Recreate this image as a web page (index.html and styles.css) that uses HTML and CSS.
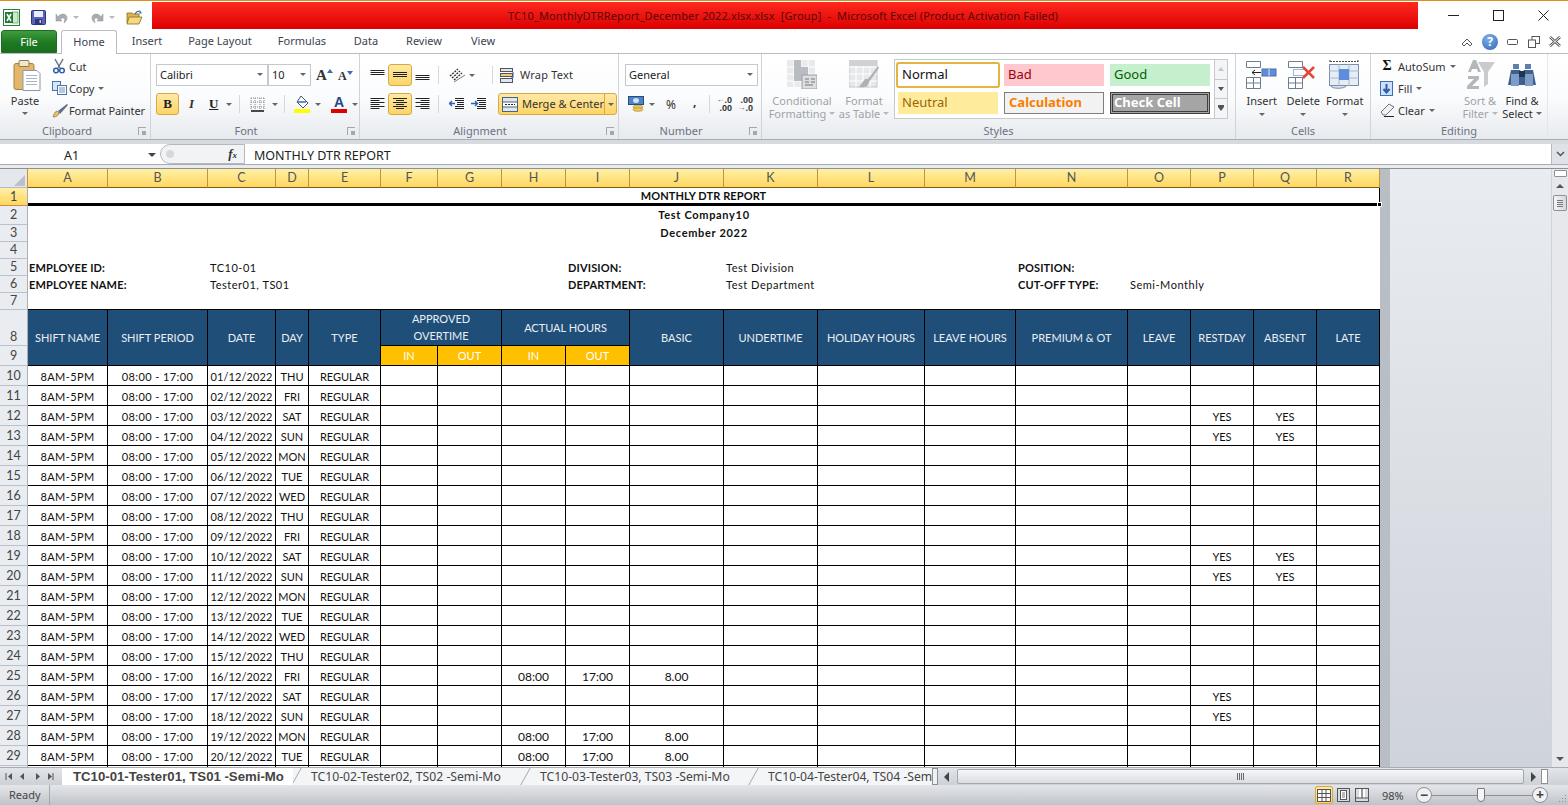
FILE: index.html
```html
<!DOCTYPE html>
<html lang="en">
<head>
<meta charset="utf-8">
<title>Excel</title>
<link rel="stylesheet" href="styles.css">
</head>
<body>
<div class="app">
<header class="titlebar">
  <div class="qat">
    <svg class="q-logo" width="17" height="17" viewBox="0 0 17 17"><rect x=".5" y=".5" width="16" height="16" fill="#fff" stroke="#2d7d3a"/><rect x="9" y="3" width="6" height="11" fill="#cfe8cf" stroke="#4a9a55" stroke-width=".7"/><path d="M2 3h8v11H2z" fill="#1f7a35"/><path d="M4 5l4 7M8 5l-4 7" stroke="#fff" stroke-width="1.6"/></svg>
    <i class="q-sep"></i>
    <svg class="q-save" width="15" height="15" viewBox="0 0 15 15"><rect x=".5" y=".5" width="14" height="14" rx="1" fill="#5a63b8" stroke="#2c3180"/><rect x="3" y="1" width="9" height="6" fill="#e8ecf5"/><rect x="4" y="9" width="7" height="5" fill="#30357f"/><rect x="8.5" y="10" width="1.5" height="3" fill="#ccd"/></svg>
    <svg class="q-undo" width="13" height="13" viewBox="0 0 13 13"><path d="M3 6c2-4 9-4 9 1 0 2-1 3-3 5 1-3 1-5-1-5-1 0-2 .5-2.500 1.500L7 10H1V3z" fill="#a9adb3" stroke="#8b8f95" stroke-width=".5"/></svg><span class="car q-car1"></span>
    <svg class="q-redo" width="13" height="13" viewBox="0 0 13 13"><path d="M10 6C8 2 1 2 1 7c0 2 1 3 3 5-1-3-1-5 1-5 1 0 2 .5 2.500 1.500L6 10h6V3z" fill="#a9adb3" stroke="#8b8f95" stroke-width=".5"/></svg><span class="car q-car2"></span>
    <svg class="q-open" width="17" height="15" viewBox="0 0 17 15"><path d="M1 3h5l1 1h6v9H1z" fill="#e0b653" stroke="#8c6a22" stroke-width=".8"/><path d="M1 14l2-7h13l-3 7z" fill="#f6d880" stroke="#8c6a22" stroke-width=".8"/><path d="M9 4c1-2 3-3 5-3M14 1l1 2-2 0" fill="none" stroke="#3a6fb0" stroke-width="1.100"/></svg>
    <i class="q-sep q-sep2"></i>
    <span class="q-more"><i></i><b class="car"></b></span>
  </div>
  <div class="redbar">TC10_MonthlyDTRReport_December 2022.xlsx.xlsx&nbsp; [Group]&nbsp; -&nbsp; Microsoft Excel (Product Activation Failed)</div>
  <div class="winctl">
    <svg width="11" height="11" viewBox="0 0 11 11"><path d="M0 5.500h11" stroke="#222"/></svg>
    <svg width="11" height="11" viewBox="0 0 11 11"><rect x=".5" y=".5" width="10" height="10" fill="none" stroke="#222"/></svg>
    <svg width="11" height="11" viewBox="0 0 11 11"><path d="M.5.500l10 10M10.500.500l-10 10" stroke="#222"/></svg>
  </div>
</header>

<nav class="tabsrow">
  <span class="file">File</span>
  <span class="tab on">Home</span>
  <span class="tab t-insert">Insert</span>
  <span class="tab t-page">Page Layout</span>
  <span class="tab t-form">Formulas</span>
  <span class="tab t-data">Data</span>
  <span class="tab t-rev">Review</span>
  <span class="tab t-view">View</span>
  <div class="helpicons">
    <svg width="12" height="10" viewBox="0 0 12 10"><path d="M1 7l5-5 5 5-2 2-3-3-3 3z" fill="#fff" stroke="#555"/></svg>
    <span class="help">?</span>
    <svg width="12" height="8" viewBox="0 0 12 8"><rect x=".5" y="1.500" width="10" height="5" rx="1" fill="#fff" stroke="#555"/></svg>
    <svg width="12" height="12" viewBox="0 0 12 12"><rect x="4" y=".5" width="7.500" height="7" fill="#fff" stroke="#555"/><rect x=".5" y="4" width="7" height="7.500" fill="#fff" stroke="#555"/></svg>
    <svg width="12" height="11" viewBox="0 0 12 11"><path d="M1 1l10 9M11 1L1 10" stroke="#555" stroke-width="2.600"/><path d="M1 1l10 9M11 1L1 10" stroke="#fff" stroke-width="1"/></svg>
  </div>
</nav>

<section class="ribbon">
  <div class="grp g-clip">
    <div class="gbody">
      <div class="big b-paste">
        <svg width="28" height="32" viewBox="0 0 28 32"><rect x="1" y="4" width="20" height="26" rx="2" fill="#e3b76a" stroke="#a88240"/><rect x="6" y="1" width="10" height="6" rx="1" fill="#efe6cf" stroke="#8c7a55"/><path d="M10 11h14l3 3v17H10z" fill="#fff" stroke="#8b97ab"/><path d="M13 16h11M13 19h11M13 22h11M13 25h11" stroke="#a9b3c4"/></svg>
        <span class="bl">Paste</span><span class="car"></span>
      </div>
      <div class="stack">
        <div class="sm"><svg width="14" height="16" viewBox="0 0 14 16"><path d="M3 1l5 9M11 1L6 10" stroke="#6b7480" stroke-width="1.500"/><circle cx="4" cy="12.500" r="2.300" fill="none" stroke="#2f5fa8" stroke-width="1.500"/><circle cx="10" cy="12.500" r="2.300" fill="none" stroke="#2f5fa8" stroke-width="1.500"/></svg><span>Cut</span></div>
        <div class="sm"><svg width="15" height="14" viewBox="0 0 15 14"><rect x=".5" y=".5" width="8" height="9" fill="#d9e6f7" stroke="#4a74ad"/><rect x="5.500" y="4.500" width="9" height="9" fill="#fff" stroke="#4a74ad"/><path d="M7 7h6M7 9h6M7 11h6" stroke="#4a74ad" stroke-width=".8"/></svg><span>Copy</span><i class="car"></i></div>
        <div class="sm"><svg width="17" height="15" viewBox="0 0 17 15"><path d="M1 14c3 0 5-1 6-4l-2-2c-3 1-3 4-4 6z" fill="#e5c36e" stroke="#8c7030" stroke-width=".7"/><path d="M6 8l9-7 1 1-8 9z" fill="#5d6f8a"/></svg><span>Format Painter</span></div>
      </div>
    </div>
    <div class="glab pad">Clipboard<i class="launch"></i></div>
  </div>

  <div class="grp g-font">
    <div class="gbody col">
      <div class="r">
        <span class="combo c-font">Calibri<i class="car"></i></span>
        <span class="combo c-size">10<i class="car"></i></span>
        <span class="fa fa1">A<sup class="tri up"></sup></span>
        <span class="fa fa2">A<sup class="tri dn"></sup></span>
      </div>
      <div class="r r2">
        <span class="hl ic-b">B</span>
        <span class="ic-i">I</span>
        <span class="ic-u">U</span><i class="car c-u"></i>
        <i class="vs v1"></i>
        <svg class="ic-bd" width="15" height="15" viewBox="0 0 15 15"><path d="M1 1h13M1 5h13M1 10h13M1 1v12M5 1v12M10 1v12M14 1v12" stroke="#888" stroke-dasharray="1 1" fill="none"/><path d="M1 14h13" stroke="#111" stroke-width="1.500"/></svg><i class="car c-bd"></i>
        <i class="vs v2"></i>
        <svg class="ic-fill" width="17" height="18" viewBox="0 0 17 18"><path d="M7 1l7 7-5 5-6-6z" fill="#fff" stroke="#44506a"/><path d="M4 7h8" stroke="#6a8fc0" stroke-width="2"/><rect y="14" width="16" height="4" fill="#ff0"/></svg><i class="car c-fill"></i>
        <span class="ic-fc">A<i></i></span><i class="car c-fc"></i>
      </div>
    </div>
    <div class="glab pad">Font<i class="launch"></i></div>
  </div>

  <div class="grp g-align">
    <div class="gbody col">
      <div class="r">
        <svg class="al a1" width="14" height="14" viewBox="0 0 14 14"><path d="M0 2.500h14M0 4.500h14M0 6.500h14" stroke="#222"/></svg>
        <span class="hl al-hl"><svg width="14" height="14" viewBox="0 0 14 14"><path d="M0 4.500h14M0 6.500h14M0 8.500h14" stroke="#222"/></svg></span>
        <svg class="al a3" width="14" height="14" viewBox="0 0 14 14"><path d="M0 7.500h14M0 9.500h14M0 11.500h14" stroke="#222"/></svg>
        <i class="vs v3"></i>
        <svg class="a-or" width="18" height="16" viewBox="0 0 18 16"><path d="M2 9l8-7M4 11l8-7M6 13l8-7" stroke="#333" stroke-width="1.400" stroke-dasharray="2 1"/><path d="M6 15l11-7" stroke="#6a7c96"/></svg><i class="car c-or"></i>
        <i class="vs v4"></i>
        <svg class="a-wr" width="16" height="15" viewBox="0 0 16 15"><rect x=".5" y=".5" width="12" height="3" fill="#dfe6f2" stroke="#555"/><rect x=".5" y="5.500" width="12" height="3" fill="#f4c97e" stroke="#555"/><rect x=".5" y="10.500" width="12" height="4" fill="#dfe6f2" stroke="#555"/><path d="M13 4v6h-2" fill="none" stroke="#2f5fa8"/></svg><span class="lbl">Wrap Text</span>
      </div>
      <div class="r r2">
        <svg class="al a1" width="14" height="14" viewBox="0 0 14 14"><path d="M0 1.500h14M0 3.500h9M0 5.500h14M0 7.500h9M0 9.500h14M0 11.500h9" stroke="#222"/></svg>
        <span class="hl al-hl"><svg width="14" height="14" viewBox="0 0 14 14"><path d="M0 1.500h14M3 3.500h8M0 5.500h14M3 7.500h8M0 9.500h14M3 11.500h8" stroke="#222"/></svg></span>
        <svg class="al a3" width="14" height="14" viewBox="0 0 14 14"><path d="M0 1.500h14M5 3.500h9M0 5.500h14M5 7.500h9M0 9.500h14M5 11.500h9" stroke="#222"/></svg>
        <i class="vs v3"></i>
        <svg class="a-in1" width="15" height="14" viewBox="0 0 15 14"><path d="M6 1.500h9M6 3.500h9M8 5.500h7M8 7.500h7M6 9.500h9M6 11.500h9" stroke="#222"/><path d="M0 6.500h6M3 4L.5 6.500 3 9" fill="none" stroke="#2f5fb8" stroke-width="1.400"/></svg>
        <svg class="a-in2" width="15" height="14" viewBox="0 0 15 14"><path d="M6 1.500h9M6 3.500h9M8 5.500h7M8 7.500h7M6 9.500h9M6 11.500h9" stroke="#222"/><path d="M0 6.500h6M4 4l2.500 2.500L4 9" fill="none" stroke="#2f5fb8" stroke-width="1.400"/></svg>
        <span class="merge"><span class="m-main"><svg width="16" height="15" viewBox="0 0 16 15"><rect x=".5" y=".5" width="15" height="14" fill="#dfe6f2" stroke="#4f6278"/><rect x="1" y="5" width="14" height="5" fill="#fff"/><path d="M.5 5h15M.5 10h15" stroke="#4f6278"/><path d="M3 7.500h10" stroke="#222" stroke-dasharray="2 1"/></svg>Merge &amp; Center</span><span class="m-drop"><i class="car"></i></span></span>
      </div>
    </div>
    <div class="glab pad">Alignment<i class="launch"></i></div>
  </div>

  <div class="grp g-num">
    <div class="gbody col">
      <div class="r"><span class="combo c-gen">General<i class="car"></i></span></div>
      <div class="r r2">
        <svg class="n-cur" width="17" height="16" viewBox="0 0 17 16"><rect x=".5" y=".5" width="15" height="8" fill="#4f83c4" stroke="#244a82"/><ellipse cx="8" cy="4.500" rx="3" ry="2.500" fill="#cfe0f5"/><ellipse cx="10" cy="11" rx="5" ry="1.800" fill="#efc75e" stroke="#a27f24" stroke-width=".6"/><ellipse cx="10" cy="13.500" rx="5" ry="1.800" fill="#efc75e" stroke="#a27f24" stroke-width=".6"/></svg><i class="car c-cur"></i>
        <span class="n-pct">%</span>
        <span class="n-com">,</span>
        <i class="vs v5"></i>
        <span class="n-dec"><b class="dm"><em class="ar">←</em>.0</b><b>.00</b></span>
        <span class="n-dec n-dec2"><b>.00</b><b class="dm"><em class="ar">→</em>.0</b></span>
      </div>
    </div>
    <div class="glab pad">Number<i class="launch"></i></div>
  </div>

  <div class="grp g-styles">
    <div class="gbody">
      <div class="big dim b-cf">
        <svg width="30" height="29" viewBox="0 0 30 29"><rect width="28" height="27" fill="#e9eaec"/><path d="M7 0v27M14 0v27M21 0v27M0 7h28M0 14h28M0 21h28" stroke="#fff"/><path d="M7 0h7v7h7v14H7z" fill="#b9bcc0"/><rect x="15" y="15" width="15" height="14" fill="#dcdee1" stroke="#9b9ea3"/><path d="M18 19h4M18 22h4M18 25h8M24 19h4M24 22h4" stroke="#777"/></svg>
        <span class="bl">Conditional</span><span class="bl">Formatting<i class="car"></i></span>
      </div>
      <div class="big dim b-ft">
        <svg width="30" height="29" viewBox="0 0 30 29"><rect width="28" height="27" fill="#e7e8ea" stroke="#c3c5c8"/><path d="M7 0v27M14 0v27M21 0v27M0 7h28M0 14h28M0 21h28" stroke="#fff"/><rect y="0" width="28" height="6" fill="#cfd1d4"/><path d="M29 6L19 19l-3 0-6 8c5 1 9 0 10-5l10-14z" fill="#aeb1b5"/></svg>
        <span class="bl">Format</span><span class="bl">as Table<i class="car"></i></span>
      </div>
      <div class="gallery">
        <div class="cells">
          <span class="st st-normal">Normal</span><span class="st st-bad">Bad</span><span class="st st-good">Good</span>
          <span class="st st-neutral">Neutral</span><span class="st st-calc">Calculation</span><span class="st st-check">Check Cell</span>
        </div>
        <div class="gscroll">
          <span><i class="tri up gray"></i></span><span><i class="tri dn dark"></i></span><span class="more"><i class="tri dn dark"></i></span>
        </div>
      </div>
    </div>
    <div class="glab">Styles</div>
  </div>

  <div class="grp g-cells">
    <div class="gbody">
      <div class="big b-cell">
        <svg width="31" height="28" viewBox="0 0 31 28"><path d="M.5.500h14v6H.5zM.5 16.500h14v11H.5zM7.500 16.500v11M.5 22h14" fill="#fff" stroke="#6d7d90"/><rect x="16" y="8" width="14" height="7" fill="#5d8ddc" stroke="#4a6fa8"/><path d="M23 8v7" stroke="#dce8f8"/><path d="M6 11.500h9M9 9l-3 2.500L9 14" fill="none" stroke="#222"/></svg>
        <span class="bl">Insert</span><span class="car"></span>
      </div>
      <div class="big b-cell">
        <svg width="31" height="28" viewBox="0 0 31 28"><path d="M.5.500h14v6H.5zM.5 16.500h14v11H.5zM7.500 16.500v11M.5 22h14" fill="#fff" stroke="#6d7d90"/><rect x="5.500" y="8.500" width="13" height="6" fill="#fff" stroke="#3d6cc0" stroke-dasharray="1 1"/><path d="M15 6l11 11M26 6L15 17" stroke="#e0483a" stroke-width="2.500"/></svg>
        <span class="bl">Delete</span><span class="car"></span>
      </div>
      <div class="big b-cell">
        <svg width="31" height="30" viewBox="0 0 31 30"><path d="M1 1.500h28M1 0v3M29 0v3" stroke="#444" stroke-dasharray="2 1"/><rect x=".5" y="4.500" width="29" height="21" fill="#e6edf7" stroke="#7b8ea6"/><path d="M10 4v22M20 4v22M0 11h30M0 18h30" stroke="#a9b8cc"/><rect x="10" y="9" width="10" height="11" fill="#5d8ddc"/><path d="M2 26c0 3 14 3 15 0" fill="#dde" stroke="#7b8ea6"/></svg>
        <span class="bl">Format</span><span class="car"></span>
      </div>
    </div>
    <div class="glab">Cells</div>
  </div>

  <div class="grp g-edit">
    <div class="gbody">
      <div class="stack">
        <div class="sm"><b class="sigma">Σ</b><span>AutoSum</span><i class="car"></i></div>
        <div class="sm"><svg width="13" height="15" viewBox="0 0 13 15"><rect x=".5" y=".5" width="12" height="14" fill="#cfe0f7" stroke="#3b6fb5"/><path d="M6.500 3v7M3.500 8l3 3.500 3-3.500" fill="none" stroke="#2a5dac" stroke-width="2"/></svg><span>Fill</span><i class="car"></i></div>
        <div class="sm"><svg width="15" height="14" viewBox="0 0 15 14"><path d="M1 9l8-8 5 3-8 8H3z" fill="#eef0f3" stroke="#6c7480"/><path d="M4 13.500h10" stroke="#222"/></svg><span>Clear</span><i class="car"></i></div>
      </div>
      <div class="big dim b-ed">
        <svg width="30" height="30" viewBox="0 0 30 30"><path d="M3 12L8 0h3l5 12h-3l-1-3H7l-1 3zM3 16h11v3l-7 7h7v3H2v-3l7-7H3z" fill="#b5b7ba"/><path d="M13 2h17l-7 10v12l-4 3V12z" fill="#c9cbce"/></svg>
        <span class="bl">Sort &amp;</span><span class="bl">Filter<i class="car"></i></span>
      </div>
      <div class="big b-ed">
        <svg width="28" height="26" viewBox="0 0 28 26"><path d="M5 2h6v5H5zM17 2h6v5h-6z" fill="#5f7faa"/><path d="M3 8h9l2 3 2-3h9l3 15H0z" fill="#3f5f8e"/><path d="M3 12h8v12H3zM17 12h8v12h-8z" fill="#7d9cc6"/><rect x="11" y="9" width="6" height="6" fill="#1f3555"/></svg>
        <span class="bl">Find &amp;</span><span class="bl">Select<i class="car"></i></span>
      </div>
    </div>
    <div class="glab">Editing</div>
  </div>
</section>

<div class="band"></div>
<div class="fbar">
  <div class="namebox">A1<i class="car"></i></div>
  <div class="fxwrap"><span class="pill"><i></i></span><em>f<small>x</small></em></div>
  <div class="finput">MONTHLY DTR REPORT</div>
  <div class="fexp"><svg width="9" height="6" viewBox="0 0 9 6"><path d="M1 1l3.500 3.500L8 1" fill="none" stroke="#555" stroke-width="1.500"/></svg></div>
</div>
<div class="band band2"></div>

<main class="sheetarea">
  <table class="sheet">
    <colgroup>
      <col class="w28"><col class="w80"><col class="w100"><col class="w68"><col class="w33"><col class="w72"><col class="w57"><col class="w64"><col class="w64"><col class="w64"><col class="w94"><col class="w94"><col class="w107"><col class="w91"><col class="w112"><col class="w63"><col class="w63"><col class="w63"><col class="w63">
    </colgroup>
    <tr class="h19 colhead"><th class="corner"><i></i></th><th>A</th><th>B</th><th>C</th><th>D</th><th>E</th><th>F</th><th>G</th><th>H</th><th>I</th><th>J</th><th>K</th><th>L</th><th>M</th><th>N</th><th>O</th><th>P</th><th>Q</th><th>R</th></tr>
    <tr class="h18"><th class="sel">1</th><td colspan="18" class="title1">MONTHLY DTR REPORT<i class="handle"></i></td></tr>
    <tr class="h19"><th>2</th><td colspan="18" class="plain center bold wide up1">Test Company10</td></tr>
    <tr class="h17"><th>3</th><td colspan="18" class="plain center bold wide up1">December 2022</td></tr>
    <tr class="h17"><th>4</th><td colspan="18" class="plain"></td></tr>
    <tr class="h17"><th>5</th><td colspan="2" class="plain bold lead">EMPLOYEE ID:</td><td colspan="6" class="plain reg">TC10-01</td><td colspan="2" class="plain bold">DIVISION:</td><td colspan="3" class="plain reg">Test Division</td><td class="plain bold">POSITION:</td><td colspan="4" class="plain"></td></tr>
    <tr class="h17"><th>6</th><td colspan="2" class="plain bold lead">EMPLOYEE NAME:</td><td colspan="6" class="plain reg">Tester01, TS01</td><td colspan="2" class="plain bold">DEPARTMENT:</td><td colspan="3" class="plain reg">Test Department</td><td class="plain bold">CUT-OFF TYPE:</td><td colspan="4" class="plain reg">Semi-Monthly</td></tr>
    <tr class="h17"><th>7</th><td colspan="18" class="plain lined"></td></tr>
    <tr class="h36 hdr"><th class="rh rb">8</th><td rowspan="2">SHIFT NAME</td><td rowspan="2">SHIFT PERIOD</td><td rowspan="2">DATE</td><td rowspan="2">DAY</td><td rowspan="2">TYPE</td><td colspan="2" class="lift">APPROVED<br>OVERTIME</td><td colspan="2">ACTUAL HOURS</td><td rowspan="2">BASIC</td><td rowspan="2">UNDERTIME</td><td rowspan="2">HOLIDAY HOURS</td><td rowspan="2">LEAVE HOURS</td><td rowspan="2">PREMIUM &amp; OT</td><td rowspan="2">LEAVE</td><td rowspan="2">RESTDAY</td><td rowspan="2">ABSENT</td><td rowspan="2">LATE</td></tr>
    <tr class="h20 hdr"><th class="rh">9</th><td class="gold">IN</td><td class="gold">OUT</td><td class="gold">IN</td><td class="gold">OUT</td></tr>
    <tr><th>10</th><td class="sft">8AM-5PM</td><td class="sft">08:00 - 17:00</td><td class="dt">01/12/2022</td><td>THU</td><td>REGULAR</td><td></td><td></td><td></td><td></td><td></td><td></td><td></td><td></td><td></td><td></td><td></td><td></td><td></td></tr>
    <tr><th>11</th><td class="sft">8AM-5PM</td><td class="sft">08:00 - 17:00</td><td class="dt">02/12/2022</td><td>FRI</td><td>REGULAR</td><td></td><td></td><td></td><td></td><td></td><td></td><td></td><td></td><td></td><td></td><td></td><td></td><td></td></tr>
    <tr><th>12</th><td class="sft">8AM-5PM</td><td class="sft">08:00 - 17:00</td><td class="dt">03/12/2022</td><td>SAT</td><td>REGULAR</td><td></td><td></td><td></td><td></td><td></td><td></td><td></td><td></td><td></td><td></td><td>YES</td><td>YES</td><td></td></tr>
    <tr><th>13</th><td class="sft">8AM-5PM</td><td class="sft">08:00 - 17:00</td><td class="dt">04/12/2022</td><td>SUN</td><td>REGULAR</td><td></td><td></td><td></td><td></td><td></td><td></td><td></td><td></td><td></td><td></td><td>YES</td><td>YES</td><td></td></tr>
    <tr><th>14</th><td class="sft">8AM-5PM</td><td class="sft">08:00 - 17:00</td><td class="dt">05/12/2022</td><td>MON</td><td>REGULAR</td><td></td><td></td><td></td><td></td><td></td><td></td><td></td><td></td><td></td><td></td><td></td><td></td><td></td></tr>
    <tr><th>15</th><td class="sft">8AM-5PM</td><td class="sft">08:00 - 17:00</td><td class="dt">06/12/2022</td><td>TUE</td><td>REGULAR</td><td></td><td></td><td></td><td></td><td></td><td></td><td></td><td></td><td></td><td></td><td></td><td></td><td></td></tr>
    <tr><th>16</th><td class="sft">8AM-5PM</td><td class="sft">08:00 - 17:00</td><td class="dt">07/12/2022</td><td>WED</td><td>REGULAR</td><td></td><td></td><td></td><td></td><td></td><td></td><td></td><td></td><td></td><td></td><td></td><td></td><td></td></tr>
    <tr><th>17</th><td class="sft">8AM-5PM</td><td class="sft">08:00 - 17:00</td><td class="dt">08/12/2022</td><td>THU</td><td>REGULAR</td><td></td><td></td><td></td><td></td><td></td><td></td><td></td><td></td><td></td><td></td><td></td><td></td><td></td></tr>
    <tr><th>18</th><td class="sft">8AM-5PM</td><td class="sft">08:00 - 17:00</td><td class="dt">09/12/2022</td><td>FRI</td><td>REGULAR</td><td></td><td></td><td></td><td></td><td></td><td></td><td></td><td></td><td></td><td></td><td></td><td></td><td></td></tr>
    <tr><th>19</th><td class="sft">8AM-5PM</td><td class="sft">08:00 - 17:00</td><td class="dt">10/12/2022</td><td>SAT</td><td>REGULAR</td><td></td><td></td><td></td><td></td><td></td><td></td><td></td><td></td><td></td><td></td><td>YES</td><td>YES</td><td></td></tr>
    <tr><th>20</th><td class="sft">8AM-5PM</td><td class="sft">08:00 - 17:00</td><td class="dt">11/12/2022</td><td>SUN</td><td>REGULAR</td><td></td><td></td><td></td><td></td><td></td><td></td><td></td><td></td><td></td><td></td><td>YES</td><td>YES</td><td></td></tr>
    <tr><th>21</th><td class="sft">8AM-5PM</td><td class="sft">08:00 - 17:00</td><td class="dt">12/12/2022</td><td>MON</td><td>REGULAR</td><td></td><td></td><td></td><td></td><td></td><td></td><td></td><td></td><td></td><td></td><td></td><td></td><td></td></tr>
    <tr><th>22</th><td class="sft">8AM-5PM</td><td class="sft">08:00 - 17:00</td><td class="dt">13/12/2022</td><td>TUE</td><td>REGULAR</td><td></td><td></td><td></td><td></td><td></td><td></td><td></td><td></td><td></td><td></td><td></td><td></td><td></td></tr>
    <tr><th>23</th><td class="sft">8AM-5PM</td><td class="sft">08:00 - 17:00</td><td class="dt">14/12/2022</td><td>WED</td><td>REGULAR</td><td></td><td></td><td></td><td></td><td></td><td></td><td></td><td></td><td></td><td></td><td></td><td></td><td></td></tr>
    <tr><th>24</th><td class="sft">8AM-5PM</td><td class="sft">08:00 - 17:00</td><td class="dt">15/12/2022</td><td>THU</td><td>REGULAR</td><td></td><td></td><td></td><td></td><td></td><td></td><td></td><td></td><td></td><td></td><td></td><td></td><td></td></tr>
    <tr><th>25</th><td class="sft">8AM-5PM</td><td class="sft">08:00 - 17:00</td><td class="dt">16/12/2022</td><td>FRI</td><td>REGULAR</td><td></td><td></td><td class="num">08:00</td><td class="num">17:00</td><td class="num">8.00</td><td></td><td></td><td></td><td></td><td></td><td></td><td></td><td></td></tr>
    <tr><th>26</th><td class="sft">8AM-5PM</td><td class="sft">08:00 - 17:00</td><td class="dt">17/12/2022</td><td>SAT</td><td>REGULAR</td><td></td><td></td><td></td><td></td><td></td><td></td><td></td><td></td><td></td><td></td><td>YES</td><td></td><td></td></tr>
    <tr><th>27</th><td class="sft">8AM-5PM</td><td class="sft">08:00 - 17:00</td><td class="dt">18/12/2022</td><td>SUN</td><td>REGULAR</td><td></td><td></td><td></td><td></td><td></td><td></td><td></td><td></td><td></td><td></td><td>YES</td><td></td><td></td></tr>
    <tr><th>28</th><td class="sft">8AM-5PM</td><td class="sft">08:00 - 17:00</td><td class="dt">19/12/2022</td><td>MON</td><td>REGULAR</td><td></td><td></td><td class="num">08:00</td><td class="num">17:00</td><td class="num">8.00</td><td></td><td></td><td></td><td></td><td></td><td></td><td></td><td></td></tr>
    <tr><th>29</th><td class="sft">8AM-5PM</td><td class="sft">08:00 - 17:00</td><td class="dt">20/12/2022</td><td>TUE</td><td>REGULAR</td><td></td><td></td><td class="num">08:00</td><td class="num">17:00</td><td class="num">8.00</td><td></td><td></td><td></td><td></td><td></td><td></td><td></td><td></td></tr>
    <tr><th></th><td></td><td></td><td></td><td></td><td></td><td></td><td></td><td></td><td></td><td></td><td></td><td></td><td></td><td></td><td></td><td></td><td></td><td></td></tr>
  </table>
  <div class="shade"></div>
  <div class="empty"></div>
  <aside class="vscroll">
    <span class="vsplit"></span>
    <span class="varrow"><i class="tri up dark"></i></span>
    <span class="vthumb"></span>
    <span class="vtrack"></span>
    <span class="varrow"><i class="tri dn dark"></i></span>
  </aside>
</main>

<div class="sheettabs">
  <div class="tabnav">
    <svg width="52" height="9" viewBox="0 0 52 9"><path d="M1 1v7" stroke="#555"/><path d="M7 1L3 4.500 7 8zM19 1l-4 3.500L19 8zM31 1l4 3.500L31 8zM43 1l4 3.500L43 8z" fill="#555"/><path d="M48 1v7" stroke="#555"/></svg>
  </div>
  <div class="stabs">
    <span class="stab act">TC10-01-Tester01, TS01 -Semi-Mo</span>
    <span class="stab s2">TC10-02-Tester02, TS02 -Semi-Mo</span>
    <span class="stab s3">TC10-03-Tester03, TS03 -Semi-Mo</span>
    <span class="stab s4">TC10-04-Tester04, TS04 -Semi-Mo</span>
  </div>
  <span class="split"></span>
  <div class="hscroll">
    <i class="tri lf"></i>
    <span class="hthumb"><i></i></span>
    <i class="tri rt"></i>
    <span class="hend"></span>
  </div>
</div>

<footer class="status">
  <span class="ready">Ready</span>
  <div class="st-right">
    <span class="vw vw-on"><svg width="14" height="13" viewBox="0 0 14 13"><rect x=".5" y=".5" width="13" height="12" fill="#fff" stroke="#555"/><path d="M5 0v13M9 0v13M0 4.500h14M0 8.500h14" stroke="#555"/></svg></span>
    <span class="vw"><svg width="13" height="14" viewBox="0 0 13 14"><rect x=".5" y=".5" width="12" height="13" fill="#d8dbe0" stroke="#555"/><rect x="3.500" y="2.500" width="6" height="9" fill="#fff" stroke="#555"/><path d="M5 5h3M5 7h3M5 9h3" stroke="#777"/></svg></span>
    <span class="vw"><svg width="14" height="14" viewBox="0 0 14 14"><rect x=".5" y=".5" width="13" height="13" fill="#d8dbe0" stroke="#555"/><rect x="4" y="1" width="2" height="9" fill="#fff"/><rect x="8" y="1" width="2" height="9" fill="#fff"/><path d="M7 0v10M1 10h12" stroke="#555"/></svg></span>
    <span class="pct">98%</span>
    <span class="zbtn">−</span>
    <span class="zslide"><i></i></span>
    <span class="zbtn">+</span>
    <svg class="grip" width="10" height="10" viewBox="0 0 10 10"><path d="M8 1h1v1H8zM5 4h1v1H5zM8 4h1v1H8zM2 7h1v1H2zM5 7h1v1H5zM8 7h1v1H8z" fill="#8b9098"/></svg>
  </div>
</footer>
</div>
</body>
</html>
```
FILE: styles.css
```css
* { box-sizing: border-box; }
html, body { margin: 0; padding: 0; height: 100%; overflow: hidden; background: #fff; }
body { font-family: "Noto Sans", "Open Sans", sans-serif; font-size: 11px; color: #333; }
svg { display: block; flex: none; }
i { font-style: normal; }
.app { width: 1568px; height: 805px; display: flex; flex-direction: column; overflow: hidden; }

/* carets and triangles */
.car { display: inline-block; width: 0; height: 0; border-left: 3px solid transparent; border-right: 3px solid transparent; border-top: 3px solid #666; flex: none; }
.tri { display: inline-block; width: 0; height: 0; border-left: 4px solid transparent; border-right: 4px solid transparent; }
.tri.up { border-bottom: 4px solid #555; }
.tri.dn { border-top: 4px solid #555; }
.tri.gray.up { border-bottom-color: #c4c8ce; }
.tri.lf { border: 0; border-top: 5px solid transparent; border-bottom: 5px solid transparent; border-right: 5px solid #444; flex: none; }
.tri.rt { border: 0; border-top: 5px solid transparent; border-bottom: 5px solid transparent; border-left: 5px solid #444; flex: none; }

/* title bar */
.titlebar { height: 30px; flex: none; display: flex; border-top: 1px solid #d98f1e; padding-top: 1px; background: #fff; }
.qat { width: 152px; display: flex; align-items: center; padding: 3px 0 0 3px; flex: none; }
.q-sep { width: 1px; height: 14px; background: #8a8f96; margin: 0 7px 0 4px; }
.q-sep2 { margin: 0 4px 0 5px; }
.q-undo { margin-left: 9px; }
.q-car1 { margin: 0 0 0 5px; border-top-color: #b5b8bc; }
.q-redo { margin-left: 12px; }
.q-car2 { margin: 0 0 0 5px; border-top-color: #b5b8bc; }
.q-open { margin-left: 11px; }
.q-more { display: flex; flex-direction: column; align-items: center; gap: 1px; width: 8px; }
.q-more i { width: 7px; height: 1px; background: #222; }
.q-more .car { border-top-color: #222; border-left-width: 3.500px; border-right-width: 3.500px; border-top-width: 4px; }
.redbar { width: 1266px; height: 27px; flex: none; background: linear-gradient(#ff2a20, #dc0000); color: #5a0505; font-size: 11px; letter-spacing: .14px; text-align: center; line-height: 27px; padding-right: 4px; white-space: nowrap; }
.winctl { flex: 1; display: flex; align-items: center; padding: 0 19px 0 30px; justify-content: space-between; padding-bottom: 1px; }

/* tabs */
.tabsrow { height: 24px; flex: none; display: flex; align-items: stretch; border-bottom: 1px solid #b9bdc3; background: #fff; font-size: 11px; padding-left: 1px; color: #3c4450; }
.file { width: 56px; height: 23px; background: linear-gradient(#3f9c3f, #1d7a21 55%, #1a6e1e); border: 1px solid #1f6d22; border-radius: 3px 3px 0 0; color: #fff; display: flex; align-items: center; justify-content: center; }
.tab { display: flex; align-items: center; justify-content: center; padding-bottom: 2px; }
.tab.on { width: 56px; height: 24px; margin-left: 4px; border: 1px solid #b9bdc3; border-bottom: 0; border-radius: 3px 3px 0 0; background: #fff; z-index: 1; }
.t-insert { width: 60px; }
.t-page { width: 86px; }
.t-form { width: 78px; }
.t-data { width: 50px; }
.t-rev { width: 66px; }
.t-view { width: 52px; }
.helpicons { margin-left: auto; display: flex; align-items: center; gap: 9px; padding: 0 7px 0 0; }
.help { width: 16px; height: 16px; border-radius: 50%; background: radial-gradient(circle at 40% 30%, #7fb0ea, #2e67b8); color: #fff; font-weight: 700; font-size: 12px; line-height: 16px; text-align: center; }

/* ribbon */
.ribbon { height: 85px; flex: none; display: flex; background: linear-gradient(#fff 0, #fbfcfd 50%, #e7eaee 100%); padding-right: 20px; }
.grp { display: flex; flex-direction: column; border-right: 1px solid #d0d3d8; flex: none; }
.gbody { height: 70px; display: flex; }
.gbody.col { flex-direction: column; }
.glab { position: relative; height: 15px; text-align: center; color: #6a7282; font-size: 11px; line-height: 14px; }
.glab.pad { padding-right: 18px; }
.launch { position: absolute; right: 4px; top: 3px; width: 8px; height: 8px; border: 1px solid #a3a8b0; border-width: 1px 0 0 1px; }
.launch::after { content: ""; position: absolute; right: 0; bottom: 0; width: 4px; height: 4px; background: #a3a8b0; }
.g-clip { width: 151px; padding-left: 2px; }
.g-font { width: 209px; }
.g-align { width: 259px; }
.g-num { width: 143px; }
.g-styles { width: 474px; }
.g-cells { width: 135px; }
.g-edit { width: 177px; border-right-color: #e4e6ea; }

.big { display: flex; flex-direction: column; align-items: center; flex: none; padding-top: 3px; line-height: 13px; color: #333; }
.big svg { height: 37px; }
.big .bl { display: flex; align-items: center; gap: 3px; white-space: nowrap; }
.big > .car { margin-top: 5px; }
.dim { color: #9ea3aa; }
.dim .car { border-top-color: #b5b8bc; }
.b-paste { width: 46px; padding-top: 4px; }
.b-paste svg { height: 35px; width: 28px; margin-left: 4px; }
.b-paste .bl { margin-top: 1px; }
.stack { display: flex; flex-direction: column; padding-top: 1px; }
.sm { height: 22px; display: grid; grid-template-columns: 17px auto auto; justify-content: start; align-items: center; white-space: nowrap; color: #333; }
.sm .car { margin-left: 4px; }
.g-clip .stack { margin-left: 4px; letter-spacing: -.1px; }
.g-edit .sm { grid-template-columns: 18px auto auto; }

.r { height: 22px; margin-top: 10px; display: flex; align-items: center; position: relative; }
.r2 { margin-top: 7px; }
.combo { display: flex; align-items: center; justify-content: space-between; height: 22px; border: 1px solid #c5c9cf; background: #fff; padding: 0 4px 1px 3px; color: #222; font-size: 11px; flex: none; }
.g-font .r { padding-left: 5px; }
.c-font { width: 112px; }
.c-size { width: 43px; }
.fa { font-family: "Liberation Serif", serif; font-weight: 700; color: #333; display: flex; align-items: flex-start; flex: none; }
.fa sup { margin: 0; }
.fa .tri { border-left-width: 3px; border-right-width: 3px; border-bottom-color: #3c6cb0; border-top-color: #3c6cb0; margin-top: 2px; }
.fa1 { font-size: 15px; width: 20px; margin-left: 5px; }
.fa2 { font-size: 12px; width: 20px; margin-left: 2px; padding-top: 2px; }
.hl { background: linear-gradient(#ffe9a8, #fdd466); border: 1px solid #d8a93c; border-radius: 3px; display: flex; align-items: center; justify-content: center; flex: none; }
.ic-b { width: 23px; height: 22px; font-family: "Liberation Serif", serif; font-weight: 700; font-size: 13px; color: #222; }
.ic-i { font-family: "Liberation Serif", serif; font-style: italic; font-weight: 700; font-size: 13px; margin-left: 10px; width: 10px; color: #333; }
.ic-u { font-family: "Liberation Serif", serif; font-weight: 700; font-size: 13px; text-decoration: underline; margin-left: 10px; width: 12px; color: #222; }
.c-u { margin-left: 5px; }
.vs { width: 1px; height: 18px; background: #d5d8dd; flex: none; }
.v1 { margin-left: 7px; }
.ic-bd { margin-left: 10px; }
.c-bd { margin-left: 7px; }
.v2 { margin-left: 6px; }
.ic-fill { margin-left: 9px; }
.c-fill { margin-left: 4px; }
.ic-fc { font-size: 14px; font-weight: 700; font-family: "Liberation Sans", sans-serif; color: #24478a; margin-left: 10px; width: 16px; display: flex; flex-direction: column; align-items: center; line-height: 14px; }
.ic-fc i { width: 16px; height: 4px; background: #e00000; }
.c-fc { margin-left: 5px; }

.g-align .r { padding-left: 10px; }
.al-hl { width: 24px; height: 22px; margin: 0 3px 0 3px; }
.al { width: 15px; }
.v3 { margin: 0 9px 0 8px; }
.a-or { margin-right: 3px; }
.v4 { margin: 0 7px 0 17px; }
.lbl { margin-left: 4px; color: #333; letter-spacing: .2px; padding-bottom: 1px; }
.a-in1 { margin-left: 1px; }
.a-in2 { margin-left: 7px; }
.merge { display: flex; height: 22px; margin-left: 12px; border: 1px solid #d8a93c; border-radius: 3px; background: linear-gradient(#ffe9a8, #fdd466); }
.m-main { display: flex; align-items: center; gap: 4px; padding: 0 2px 2px 3px; width: 105px; color: #333; white-space: nowrap; }
.m-main svg { margin-top: 2px; }
.m-drop { width: 12px; border-left: 1px solid #d8a93c; display: flex; align-items: center; justify-content: center; }

.g-num .r { padding-left: 6px; }
.c-gen { width: 133px; }
.n-cur { margin-left: 3px; }
.c-cur { margin-left: 4px; }
.n-pct { margin-left: 11px; font-size: 12px; color: #333; width: 12px; }
.n-com { margin-left: 15px; font-weight: 700; font-size: 12px; width: 6px; color: #333; padding-bottom: 5px; }
.v5 { margin: 0 6px 0 10px; }
.n-dec { display: flex; flex-direction: column; font-size: 9px; line-height: 8px; font-weight: 700; color: #333; align-items: flex-end; width: 16px; font-family: "Liberation Sans", sans-serif; }
.n-dec b { display: flex; align-items: center; }
.n-dec2 { margin-left: 5px; }
.ar { font-style: normal; color: #2f5fb8; font-size: 8px; }

.g-styles .gbody { padding-left: 9px; }
.b-cf { width: 62px; }
.b-cf svg, .b-ft svg { height: 29px; margin-top: 3px; margin-bottom: 5px; }
.b-ft { width: 62px; }
.gallery { width: 334px; height: 60px; margin: 5px 0 0 -1px; display: flex; flex: none; }
.cells { width: 321px; height: 60px; border: 1px solid #c5c9cf; background: #fff; display: grid; grid-template-columns: 100px 100px 100px; grid-auto-rows: 22px; column-gap: 6px; row-gap: 6px; padding: 4px 0 0 3px; font-size: 13px; }
.st { display: flex; align-items: center; padding: 0 0 2px 4px; white-space: nowrap; }
.st-normal { background: #fff; color: #111; box-shadow: 0 0 0 2px #e4b63f; border-radius: 1px; }
.st-bad { background: #ffc7ce; color: #9c0006; }
.st-good { background: #c6efce; color: #006100; }
.st-neutral { background: #ffeb9c; color: #9c6500; }
.st-calc { background: #f2f2f2; color: #fa7d00; border: 1px solid #7f7f7f; font-weight: 700; }
.st-check { background: #a5a5a5; color: #fff; font-weight: 700; border: 3px double #3f3f3f; padding-left: 1px; }
.gscroll { width: 13px; display: flex; flex-direction: column; border: 1px solid #c5c9cf; border-left: 0; }
.gscroll span { flex: 1; display: flex; align-items: center; justify-content: center; background: #f4f5f7; }
.gscroll span + span { border-top: 1px solid #c5c9cf; }
.gscroll .tri { border-left-width: 3px; border-right-width: 3px; }
.gscroll .more .tri { box-shadow: 0 -2px 0 0 #555; }
.g-cells .gbody { padding: 0 0 0 5px; }
.b-cell { width: 41.500px; }
.b-cell svg { height: 30px; margin: 3px 0 4px; }
.b-cell > .car { margin-top: 6px; }
.g-edit .stack { margin-left: 9px; width: 79px; flex: none; }
.sigma { font-family: "Liberation Serif", serif; color: #111; font-size: 14px; width: 14px; text-align: center; }
.b-ed { width: 42px; }
.b-ed svg { height: 30px; margin: 3px 0 4px; }

/* formula bar */
.band { height: 5px; flex: none; background: #d7dbe0; border-top: 1px solid #a9adb3; }
.band2 { background: #e9ebee; border-top: 1px solid #a9adb3; border-bottom: 1px solid #8d9197; }
.fbar { height: 20px; flex: none; display: flex; background: #fff; padding-left: 2px; font-size: 12.500px; color: #222; font-family: "Noto Sans", sans-serif; }
.namebox { width: 158px; display: flex; align-items: center; padding: 2px 4px 0 62px; justify-content: space-between; }
.namebox .car { border-left-width: 4px; border-right-width: 4px; border-top-width: 4px; border-top-color: #444; }
.fxwrap { width: 85px; display: flex; align-items: center; justify-content: space-between; padding: 0 7px 0 5px; border: 1px solid #b5b9bf; border-radius: 10px 0 0 10px; background: #f2f3f5; }
.pill { display: flex; align-items: center; }
.pill i { width: 8px; height: 8px; background: #d5d8dc; border-radius: 50%; }
.fxwrap em { font-family: "Liberation Serif", serif; font-weight: 700; font-size: 13px; color: #333; }
.fxwrap small { font-size: 9px; }
.finput { flex: 1; padding-left: 9px; line-height: 22px; padding-top: 1px; }
.fexp { width: 17px; border-left: 1px solid #b5b9bf; background: #dfe2e6; display: flex; align-items: center; justify-content: center; }

/* sheet */
.sheetarea { height: 598px; flex: none; display: flex; align-items: flex-start; overflow: hidden; }
.sheet { width: 1380px; table-layout: fixed; border-collapse: separate; border-spacing: 0; flex: none; font-family: Lato, sans-serif; font-size: 11px; color: #111; background: #fff; }
.w28 { width: 28px; } .w80 { width: 80px; } .w100 { width: 100px; } .w68 { width: 68px; } .w33 { width: 33px; } .w72 { width: 72px; } .w57 { width: 57px; } .w64 { width: 64px; } .w94 { width: 94px; } .w107 { width: 107px; } .w91 { width: 91px; } .w112 { width: 112px; } .w63 { width: 63px; }
.sheet tr { height: 20px; }
.sheet tr.h17 { height: 17px; } .sheet tr.h18 { height: 18px; } .sheet tr.h19 { height: 19px; } .sheet tr.h20 { height: 20px; } .sheet tr.h36 { height: 36px; }
.sheet td, .sheet th { padding: 0; overflow: hidden; white-space: nowrap; text-align: center; }
.sheet td { border-right: 1px solid #000; border-bottom: 1px solid #000; line-height: 14px; }
.sheet tr:not([class]) td { padding-top: 2px; }
.sheet th { background: #e9ecf1; color: #444; font-weight: 400; font-size: 12.500px; line-height: 14px; border-bottom: 1px solid #bcc1c9; border-right: 1px solid #a9aeb6; }
.colhead th { background: linear-gradient(#fff0a8, #ffd75e); border-bottom: 1px solid #7a5a20; border-right: 1px solid #c8923c; color: #555; font-size: 12.500px; }
.colhead th.corner { background: #e4e7ec; border-bottom-color: #b5bac2; position: relative; }
.corner i { display: block; margin: 4px 2px 0 auto; width: 0; height: 0; border-left: 11px solid transparent; border-bottom: 11px solid #bcc1c8; }
.sheet th.sel { background: linear-gradient(#fff0a8, #ffd75e); border-bottom-color: #c8923c; }
.sheet td.title1 { position: relative; font-weight: 700; letter-spacing: .1px; border: 1px solid #000; border-top: 0; border-bottom: 3px solid #000; border-left: 0; text-align: center; line-height: 14px; overflow: visible; }
.handle { position: absolute; right: -3px; bottom: -4px; width: 5px; height: 5px; background: #000; border: 1px solid #fff; }
.sheet td.plain { border: 0; text-align: left; padding-left: 2px; }
.sheet td.plain.lead { padding-left: 1px; }
.sheet td.plain.center { text-align: center; padding-left: 0; }
.sheet td.plain.up1 { padding-bottom: 2px; }
.sheet td.lined { border-bottom: 1px solid #000; }
.bold { font-weight: 700; letter-spacing: .15px; }
.wide { letter-spacing: .68px; }
.reg { letter-spacing: .52px; }
.sft { letter-spacing: .4px; }
.hdr td { background: #1f4e78; color: #e9eef4; font-size: 11px; line-height: 17px; }
.hdr td.gold { background: #ffc000; color: #fff; }
.hdr td.lift { vertical-align: top; }
.sheet th.rh { background: #e9ecf1; }
.sheet th.rb { vertical-align: bottom; padding-bottom: 1px; }
.dt { letter-spacing: .1px; }
.num { font-size: 12px; }
.shade { width: 10px; height: 598px; flex: none; background: #b9bdc4; }
.empty { flex: 1; height: 598px; background: linear-gradient(#e9ecf0, #cfd3da); }
.vscroll { width: 17px; height: 598px; flex: none; background: #e6e8eb; display: flex; flex-direction: column; align-items: center; border-left: 1px solid #d0d3d8; }
.vsplit { width: 13px; height: 7px; margin: 1px 0 0; background: #fff; border: 1px solid #8d9197; border-radius: 1px; }
.varrow { height: 17px; width: 15px; display: flex; align-items: center; justify-content: center; }
.vthumb { width: 14px; height: 16px; margin-top: 1px; background: repeating-linear-gradient(#777 0 1px, transparent 1px 2px) center / 6px 7px no-repeat, linear-gradient(90deg, #f5f6f8, #d5d8dd); border: 1px solid #8d9197; border-radius: 2px; }
.vtrack { flex: 1; }

/* sheet tabs */
.sheettabs { height: 18px; flex: none; display: flex; align-items: center; background: linear-gradient(#e2e5e9, #cdd1d7); font-size: 12.200px; color: #444; border-top: 1px solid #a9adb3; }
.tabnav { width: 62px; height: 17px; padding-left: 5px; display: flex; align-items: center; flex: none; }
.stabs { width: 870px; height: 17px; display: flex; overflow: hidden; flex: none; background: #f4f5f7; }
.stab { position: relative; display: flex; align-items: center; white-space: nowrap; flex: none; z-index: 0; }
.stab::before { content: ""; position: absolute; left: 3px; width: 1px; top: 0; bottom: 0; background: #a3a7ae; transform: skewX(-29deg); z-index: -1; }
.act { width: 231px; background: #fff; padding-left: 11px; font-family: "Liberation Sans", sans-serif; font-weight: 700; font-size: 13.200px; color: #444; z-index: 2; }
.act::before { display: none; }
.s2 { width: 229px; padding-left: 18px; }
.s3 { width: 228px; padding-left: 18px; }
.s4 { width: 185px; padding-left: 18px; }
.split { width: 6px; height: 17px; background: #f0f1f3; border: 1px solid #8d9197; flex: none; }
.hscroll { flex: 1; display: flex; align-items: center; padding-left: 6px; height: 17px; }
.hthumb { width: 567px; height: 15px; margin: 0 7px 0 8px; background: linear-gradient(#f6f7f9, #d9dce1); border: 1px solid #a3a7ae; border-radius: 2px; display: flex; align-items: center; justify-content: center; flex: none; }
.hthumb i { width: 7px; height: 7px; background: repeating-linear-gradient(90deg, #666 0 1px, transparent 1px 2px); }
.hend { width: 7px; height: 15px; margin-left: 5px; background: #fff; border: 1px solid #8d9197; flex: none; }

/* status */
.status { height: 20px; flex: none; display: flex; align-items: center; background: linear-gradient(#e4e6ea, #bfc3c9); color: #444; font-size: 11px; }
.ready { width: 50px; padding-left: 9px; border-right: 1px solid #a5a9af; height: 20px; line-height: 20px; flex: none; }
.st-right { margin-left: auto; display: flex; align-items: center; height: 20px; }
.vw { width: 18px; height: 18px; margin-right: 1px; display: flex; align-items: center; justify-content: center; }
.vw-on { background: linear-gradient(#ffe9a8, #fdd466); border: 1px solid #d8a93c; border-radius: 2px; }
.pct { width: 44px; text-align: left; padding-left: 10px; }
.zbtn { width: 16px; height: 16px; border: 1px solid #8d9197; border-radius: 50%; background: #f0f1f3; text-align: center; line-height: 13px; font-weight: 700; font-size: 14px; color: #444; }
.zslide { width: 100px; height: 1px; background: #8d9197; position: relative; margin: 0; }
.zslide i { position: absolute; left: 45px; top: -7px; width: 8px; height: 14px; background: #f5f6f8; border: 1px solid #777; border-radius: 1px 1px 4px 4px; }
.grip { margin: 8px 1px 0 9px; }
```
